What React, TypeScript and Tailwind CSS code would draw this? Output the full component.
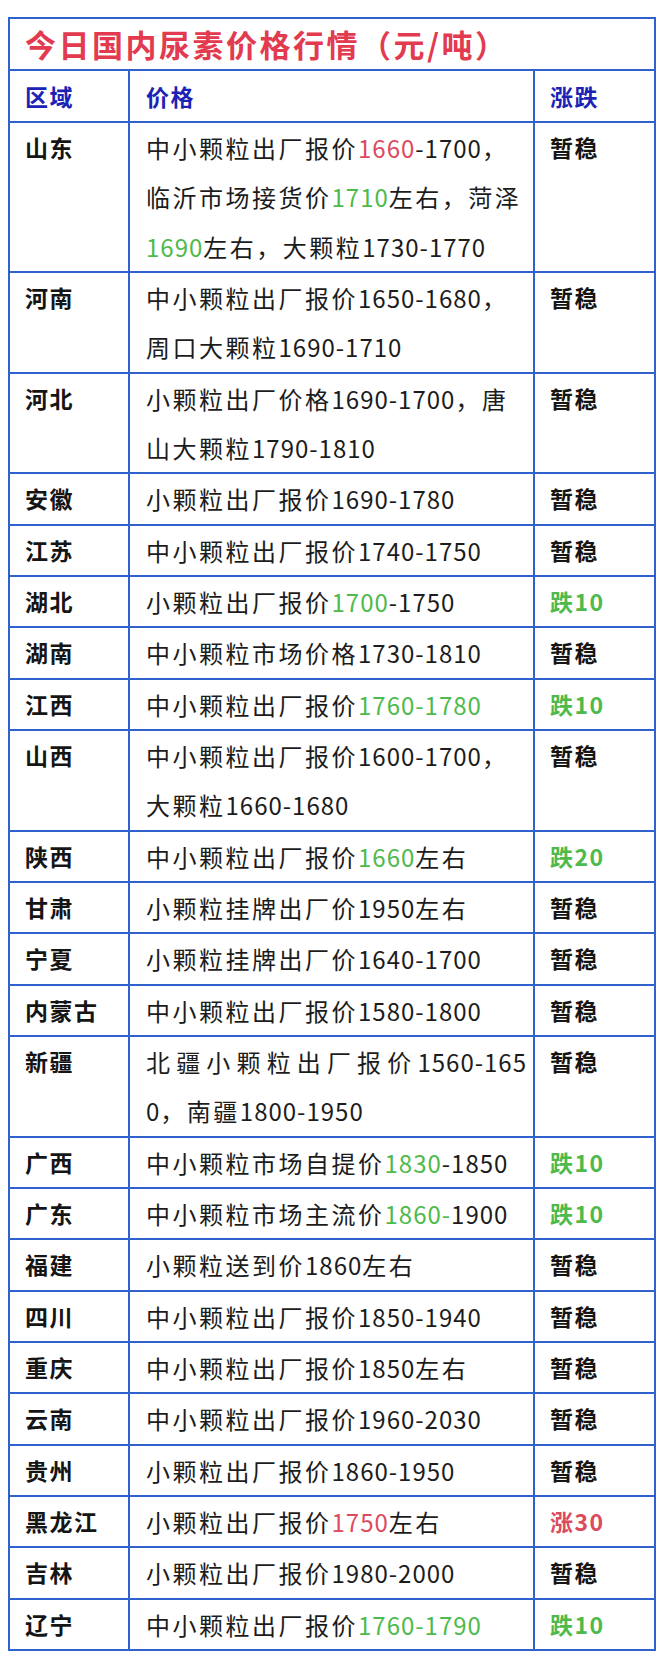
import React from 'react';

type Row = {
  region: string;
  lines: string[];
  change: string;
  justifyFirst?: boolean;
};

// [r...] = red, [g...] = green
const ROWS: Row[] = [
  {
    region: '山东',
    lines: ['中小颗粒出厂报价[r1660]-1700，', '临沂市场接货价[g1710]左右，菏泽', '[g1690]左右，大颗粒1730-1770'],
    change: '暂稳',
  },
  { region: '河南', lines: ['中小颗粒出厂报价1650-1680，', '周口大颗粒1690-1710'], change: '暂稳' },
  { region: '河北', lines: ['小颗粒出厂价格1690-1700，唐', '山大颗粒1790-1810'], change: '暂稳' },
  { region: '安徽', lines: ['小颗粒出厂报价1690-1780'], change: '暂稳' },
  { region: '江苏', lines: ['中小颗粒出厂报价1740-1750'], change: '暂稳' },
  { region: '湖北', lines: ['小颗粒出厂报价[g1700]-1750'], change: '跌10' },
  { region: '湖南', lines: ['中小颗粒市场价格1730-1810'], change: '暂稳' },
  { region: '江西', lines: ['中小颗粒出厂报价[g1760-1780]'], change: '跌10' },
  { region: '山西', lines: ['中小颗粒出厂报价1600-1700，', '大颗粒1660-1680'], change: '暂稳' },
  { region: '陕西', lines: ['中小颗粒出厂报价[g1660]左右'], change: '跌20' },
  { region: '甘肃', lines: ['小颗粒挂牌出厂价1950左右'], change: '暂稳' },
  { region: '宁夏', lines: ['小颗粒挂牌出厂价1640-1700'], change: '暂稳' },
  { region: '内蒙古', lines: ['中小颗粒出厂报价1580-1800'], change: '暂稳' },
  {
    region: '新疆',
    lines: ['北疆小颗粒出厂报价1560-165', '0，南疆1800-1950'],
    change: '暂稳',
    justifyFirst: true,
  },
  { region: '广西', lines: ['中小颗粒市场自提价[g1830]-1850'], change: '跌10' },
  { region: '广东', lines: ['中小颗粒市场主流价[g1860-]1900'], change: '跌10' },
  { region: '福建', lines: ['小颗粒送到价1860左右'], change: '暂稳' },
  { region: '四川', lines: ['中小颗粒出厂报价1850-1940'], change: '暂稳' },
  { region: '重庆', lines: ['中小颗粒出厂报价1850左右'], change: '暂稳' },
  { region: '云南', lines: ['中小颗粒出厂报价1960-2030'], change: '暂稳' },
  { region: '贵州', lines: ['小颗粒出厂报价1860-1950'], change: '暂稳' },
  { region: '黑龙江', lines: ['小颗粒出厂报价[r1750]左右'], change: '涨30' },
  { region: '吉林', lines: ['小颗粒出厂报价1980-2000'], change: '暂稳' },
  { region: '辽宁', lines: ['中小颗粒出厂报价[g1760-1790]'], change: '跌10' },
];

// split a line into plain / coloured parts, and narrow the spacing of digit runs
function renderLine(line: string) {
  const parts: React.ReactNode[] = [];
  const re = /\[(r|g)([^\]]+)\]/g;
  let last = 0;
  let m: RegExpExecArray | null;
  let k = 0;
  const pushText = (text: string, color?: string) => {
    text.split(/([0-9-]+)/).forEach((piece) => {
      if (!piece) return;
      const isNum = /^[0-9-]+$/.test(piece);
      parts.push(
        <span
          key={k++}
          className={`${isNum ? 'tracking-[1px]' : ''} ${
            color === 'r' ? 'text-[#dc4a5e]' : color === 'g' ? 'text-[#4dba4b]' : ''
          }`}
        >
          {piece}
        </span>
      );
    });
  };
  while ((m = re.exec(line))) {
    if (m.index > last) pushText(line.slice(last, m.index));
    pushText(m[2], m[1]);
    last = m.index + m[0].length;
  }
  if (last < line.length) pushText(line.slice(last));
  return parts;
}

function changeColor(change: string) {
  if (change.startsWith('跌')) return 'text-[#4dba4b]';
  if (change.startsWith('涨')) return 'text-[#dc4a5e]';
  return 'text-[#151515]';
}

export default function App() {
  return (
    <div className="min-h-[1676px] w-[660px] bg-white pt-[17px] font-['Noto_Sans_CJK_SC',sans-serif]">
      <div className="ml-[8px] w-[648px] border-2 border-[#2f62cf]">
        {/* Title */}
        <div className="flex h-[52px] items-center border-b-2 border-[#2f62cf] pl-[15px]">
          <span className="text-[31px] font-bold tracking-[2.5px] text-[#e23a4f]">
            今日国内尿素价格行情（元/吨）
          </span>
        </div>

        {/* Header */}
        <div className="grid h-[52px] grid-cols-[120px_405px_1fr] border-b-2 border-[#2f62cf] text-[23px] font-bold tracking-[1.5px] text-[#1b22b5]">
          <div className="flex items-center border-r-2 border-[#2f62cf] pl-[15px]">区域</div>
          <div className="flex items-center border-r-2 border-[#2f62cf] pl-[16px]">价格</div>
          <div className="flex items-center pl-[15px]">涨跌</div>
        </div>

        {/* Rows */}
        {ROWS.map((row, i) => (
          <div
            key={row.region}
            className={`grid grid-cols-[120px_405px_1fr] leading-[49.33px] ${
              i < ROWS.length - 1 ? 'border-b-2 border-[#2f62cf]' : ''
            }`}
          >
            <div className="border-r-2 border-[#2f62cf] pl-[15px] text-[23px] font-bold tracking-[1.5px] text-[#151515]">
              {row.region}
            </div>
            <div className="border-r-2 border-[#2f62cf] pl-[16px] pr-[6px] text-[24px] tracking-[2.5px] text-[#1c1c1c]">
              {row.lines.map((line, j) => (
                <div
                  key={j}
                  className={`whitespace-nowrap ${
                    row.justifyFirst && j === 0 ? 'text-justify [text-align-last:justify]' : ''
                  }`}
                >
                  {renderLine(line)}
                </div>
              ))}
            </div>
            <div className={`pl-[15px] text-[23px] font-bold tracking-[1.5px] ${changeColor(row.change)}`}>
              {row.change}
            </div>
          </div>
        ))}
      </div>
    </div>
  );
}
